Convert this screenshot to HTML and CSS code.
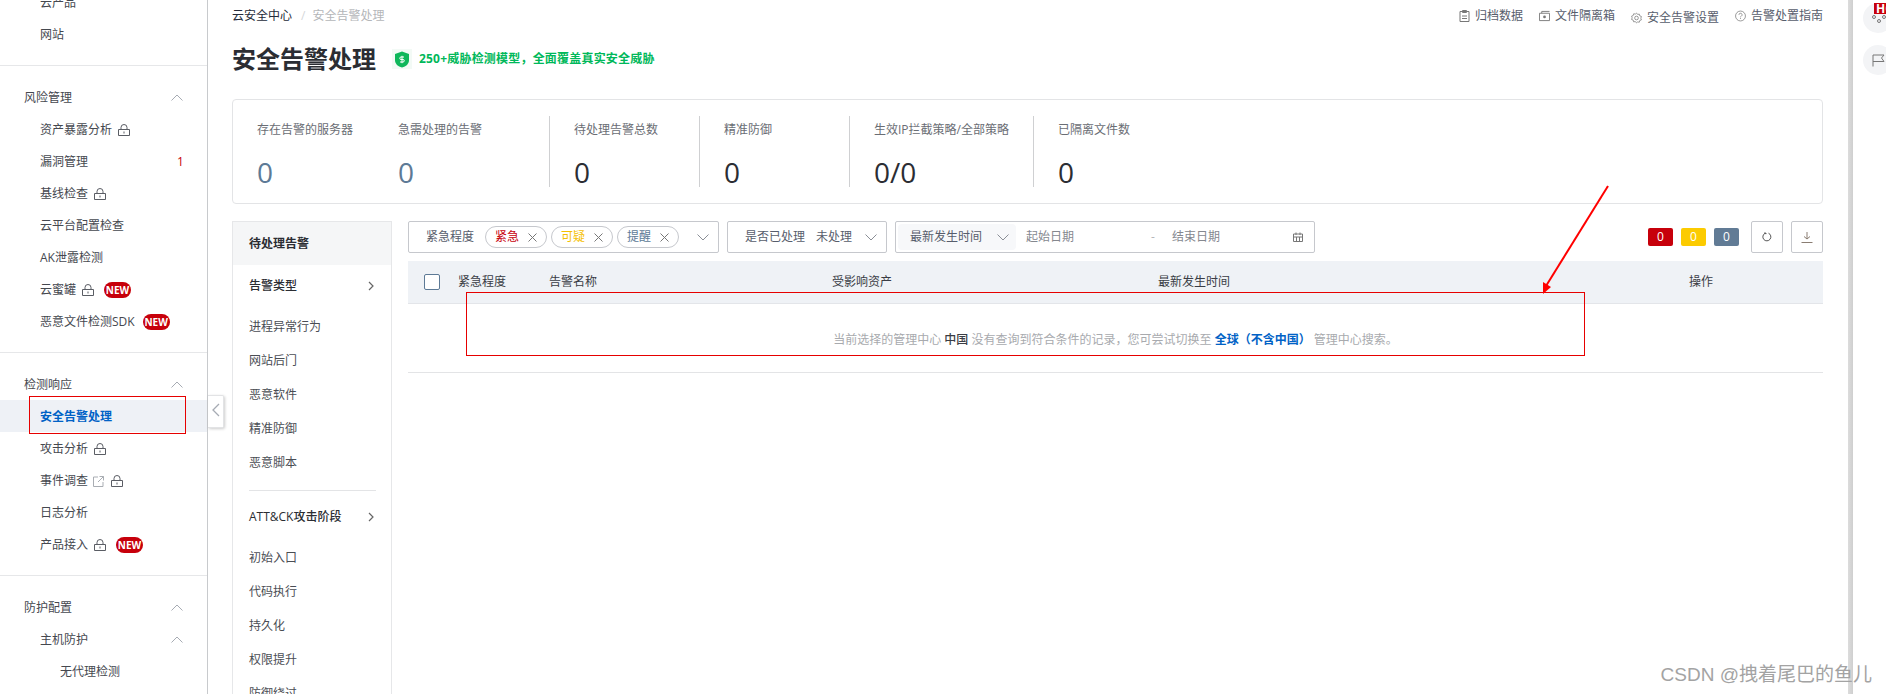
FILE: index.html
```html
<!DOCTYPE html>
<html lang="zh-CN">
  <head>
    <meta charset="UTF-8" />
    <title>安全告警处理</title>
    <link rel="stylesheet" href="styles.css">
  </head>
  <body>
    <!-- Shared icons -->
    <svg class="defs" width="0" height="0">
      <symbol id="i-lock" viewBox="0 0 12 12"><path d="M3 5.500V3.500a3 3 0 0 1 6 0v2M.5 5.500h11v6H.5zM6 7.500v2" fill="none" stroke="currentColor"/></symbol>
      <symbol id="i-up" viewBox="0 0 12 7"><path d="M.5 6.500 6 1l5.500 5.500" fill="none" stroke="currentColor"/></symbol>
      <symbol id="i-down" viewBox="0 0 12 7"><path d="M.5.5 6 6 11.500.5" fill="none" stroke="currentColor"/></symbol>
      <symbol id="i-right" viewBox="0 0 6 10"><path d="M1 1l4 4-4 4" fill="none" stroke="currentColor" stroke-width="1.200"/></symbol>
      <symbol id="i-x" viewBox="0 0 9 9"><path d="M.5.5l8 8M8.500.5l-8 8" fill="none" stroke="currentColor"/></symbol>
    </svg>

    <div class="page">
      <aside class="sidebar">
        <div class="nav-group nav-first">
          <div class="nav-item">云产品</div>
          <div class="nav-item">网站</div>
        </div>
        <div class="nav-group">
          <div class="nav-title">风险管理<svg class="nav-arrow"><use href="#i-up"/></svg></div>
          <div class="nav-item">资产暴露分析<svg class="lock"><use href="#i-lock"/></svg></div>
          <div class="nav-item">漏洞管理<span class="count">1</span></div>
          <div class="nav-item">基线检查<svg class="lock"><use href="#i-lock"/></svg></div>
          <div class="nav-item">云平台配置检查</div>
          <div class="nav-item">AK泄露检测</div>
          <div class="nav-item">云蜜罐<svg class="lock"><use href="#i-lock"/></svg><span class="new">NEW</span></div>
          <div class="nav-item">恶意文件检测SDK<span class="new new-near">NEW</span></div>
        </div>
        <div class="nav-group">
          <div class="nav-title">检测响应<svg class="nav-arrow"><use href="#i-up"/></svg></div>
          <div class="nav-item active">安全告警处理</div>
          <div class="nav-item">攻击分析<svg class="lock"><use href="#i-lock"/></svg></div>
          <div class="nav-item">事件调查
            <svg class="ext" viewBox="0 0 11 11"><path d="M5 1H.5v9.500h9.500V6M6.500.5h4v4M10.500.5 5 6" fill="none" stroke="currentColor"/></svg>
            <svg class="lock"><use href="#i-lock"/></svg>
          </div>
          <div class="nav-item">日志分析</div>
          <div class="nav-item">产品接入<svg class="lock"><use href="#i-lock"/></svg><span class="new">NEW</span></div>
        </div>
        <div class="nav-group nav-last">
          <div class="nav-title">防护配置<svg class="nav-arrow"><use href="#i-up"/></svg></div>
          <div class="nav-item">主机防护<svg class="nav-arrow"><use href="#i-up"/></svg></div>
          <div class="nav-item nav-sub">无代理检测</div>
        </div>
      </aside>

      <button class="collapse" type="button">
        <svg width="8" height="14" viewBox="0 0 8 14"><path d="M7 1 1 7l6 6" fill="none" stroke="currentColor" stroke-width="1.300"/></svg>
      </button>

      <main class="main">
        <div class="topbar">
          <div class="crumbs">
            <span class="crumb-root">云安全中心</span>
            <span class="crumb-sep">/</span>
            <span class="crumb-now">安全告警处理</span>
          </div>
          <div class="links">
            <a class="link">
              <svg viewBox="0 0 10 12"><path d="M.5 1.500h9v10h-9zM3 .5h4v2H3zM2.500 6h5M2.500 8.500h5" fill="none" stroke="currentColor"/></svg>归档数据
            </a>
            <a class="link">
              <svg viewBox="0 0 12 11"><path d="M.5 2.500h11v8H.5zM3 2.500V.5h8.500" fill="none" stroke="currentColor"/><circle cx="6" cy="6.500" r="1.500" fill="currentColor"/></svg>文件隔离箱
            </a>
            <a class="link link-low">
              <svg viewBox="0 0 12 12"><path d="M6 .6l1.200 1.500 1.900-.3.500 1.900 1.800.7-.7 1.800.7 1.800-1.800.7-.5 1.900-1.900-.3L6 11.400l-1.200-1.500-1.900.3-.5-1.900L.6 7.600l.7-1.800-.7-1.800 1.800-.7.500-1.900 1.900.3z" fill="none" stroke="currentColor" stroke-width=".8"/><circle cx="6" cy="6" r="2" fill="none" stroke="currentColor" stroke-width=".8"/></svg>安全告警设置
            </a>
            <a class="link">
              <svg viewBox="0 0 12 12"><circle cx="6" cy="6" r="5.400" fill="none" stroke="currentColor" stroke-width=".8"/><path d="M4.300 4.700a1.700 1.700 0 1 1 2.500 1.500c-.6.300-.8.600-.8 1.200M6 8.300v1" fill="none" stroke="currentColor" stroke-width=".8"/></svg>告警处置指南
            </a>
          </div>
        </div>

        <div class="title-row">
          <h1 class="title">安全告警处理</h1>
          <span class="shield">
            <svg width="16" height="17" viewBox="0 0 16 17"><path d="M8 .5 15 3v6c0 4-3 6.500-7 7.500C4 15.500 1 13 1 9V3z" fill="#0fb75b"/><path d="M10 6H7a1 1 0 0 0 0 2.500h2a1 1 0 0 1 0 2.500H6M8 4.800v7.400" fill="none" stroke="#fff"/></svg>
          </span>
          <span class="slogan">250+威胁检测模型，全面覆盖真实安全威胁</span>
        </div>

        <section class="stats">
          <div class="stat stat-first">
            <div class="stat-label">存在告警的服务器</div>
            <div class="stat-value muted">0</div>
          </div>
          <div class="stat stat-second">
            <div class="stat-label">急需处理的告警</div>
            <div class="stat-value muted">0</div>
          </div>
          <div class="stat">
            <div class="stat-label">待处理告警总数</div>
            <div class="stat-value">0</div>
          </div>
          <div class="stat">
            <div class="stat-label">精准防御</div>
            <div class="stat-value">0</div>
          </div>
          <div class="stat stat-wide">
            <div class="stat-label">生效IP拦截策略/全部策略</div>
            <div class="stat-value">0/0</div>
          </div>
          <div class="stat stat-last">
            <div class="stat-label">已隔离文件数</div>
            <div class="stat-value">0</div>
          </div>
        </section>

        <div class="content">
          <div class="filters">
            <div class="filter-head">待处理告警</div>
            <div class="filter-type">告警类型<svg class="type-arrow"><use href="#i-right"/></svg></div>
            <div class="filter-item">进程异常行为</div>
            <div class="filter-item">网站后门</div>
            <div class="filter-item">恶意软件</div>
            <div class="filter-item">精准防御</div>
            <div class="filter-item">恶意脚本</div>
            <div class="filter-line"></div>
            <div class="filter-type">ATT&amp;CK攻击阶段<svg class="type-arrow"><use href="#i-right"/></svg></div>
            <div class="filter-item">初始入口</div>
            <div class="filter-item">代码执行</div>
            <div class="filter-item">持久化</div>
            <div class="filter-item">权限提升</div>
            <div class="filter-item">防御绕过</div>
          </div>

          <div class="results">
            <div class="toolbar">
              <div class="select select-level">
                <span class="select-label">紧急程度</span>
                <span class="chip chip-red">紧急<svg class="chip-x"><use href="#i-x"/></svg></span>
                <span class="chip chip-yellow">可疑<svg class="chip-x"><use href="#i-x"/></svg></span>
                <span class="chip chip-grey">提醒<svg class="chip-x"><use href="#i-x"/></svg></span>
                <svg class="select-arrow"><use href="#i-down"/></svg>
              </div>
              <div class="select select-done">
                <span class="select-label">是否已处理</span>
                <span class="select-value">未处理</span>
                <svg class="select-arrow"><use href="#i-down"/></svg>
              </div>
              <div class="select select-date">
                <span class="date-type">最新发生时间<svg class="select-arrow"><use href="#i-down"/></svg></span>
                <span class="date-start">起始日期</span>
                <span class="date-dash">-</span>
                <span class="date-end">结束日期</span>
                <svg class="calendar" viewBox="0 0 10 10"><path d="M.5 2h9v7.500h-9zM.5 5h9M3 .5V3M7 .5V3M3.500 5v4.500M6.500 5v4.500" fill="none" stroke="currentColor"/></svg>
              </div>
              <div class="tools">
                <span class="num num-red">0</span>
                <span class="num num-yellow">0</span>
                <span class="num num-grey">0</span>
                <button class="tool first-tool" type="button">
                  <svg width="10" height="10" viewBox="0 0 10 10"><path d="M6.500 1.200a4 4 0 1 1-3.500.1M3 .2v1.400h1.500" fill="none" stroke="currentColor"/></svg>
                </button>
                <button class="tool" type="button">
                  <svg width="12" height="11" viewBox="0 0 12 11"><path d="M6 0v7M3 4.500 6 7l3-2.500M.5 10.500h11" fill="none" stroke="#8a7d72"/></svg>
                </button>
              </div>
            </div>

            <div class="table-head">
              <span class="checkbox"></span>
              <span>紧急程度</span>
              <span>告警名称</span>
              <span>受影响资产</span>
              <span>最新发生时间</span>
              <span>操作</span>
            </div>
            <div class="table-empty">
              当前选择的管理中心&nbsp;<b class="em-dark">中国</b>&nbsp;没有查询到符合条件的记录，您可尝试切换至&nbsp;<a class="em-blue">全球（不含中国）</a>&nbsp;管理中心搜索。
            </div>
          </div>
        </div>
      </main>

      <div class="edge"></div>
      <div class="rail">
        <div class="rail-btn">
          <span class="hot">HOT</span>
          <svg width="14" height="10" viewBox="0 0 14 10"><circle cx="2" cy="4" r="1.500" fill="none" stroke="#777"/><circle cx="7" cy="8" r="1.500" fill="none" stroke="#777"/><circle cx="12" cy="4" r="1.500" fill="none" stroke="#777"/></svg>
        </div>
        <div class="rail-btn">
          <svg width="13" height="13" viewBox="0 0 13 13"><path d="M1 12.500V1h11l-2.500 3L12 7.500H1" fill="none" stroke="#777"/></svg>
        </div>
      </div>
    </div>

    <!-- Red marks drawn on top of the screenshot -->
    <svg class="marks" width="1886" height="694" viewBox="0 0 1886 694">
      <rect x="29.500" y="396.500" width="156" height="37" fill="none" stroke="#e60000"/>
      <rect x="466.500" y="292.500" width="1118" height="63" fill="none" stroke="#e60000"/>
      <path d="M1608 186 1546 286" fill="none" stroke="#f00" stroke-width="2"/>
      <path d="M1543 294 1543 282 1551 287z" fill="#f00"/>
    </svg>
    <div class="watermark">CSDN @拽着尾巴的鱼儿</div>
  </body>
</html>
```

FILE: styles.css
```css
/* Base */
* {
  box-sizing: border-box;
}

html,
body {
  margin: 0;
  height: 694px;
  overflow: hidden;
  background: #fff;
}

body {
  position: relative;
  font-family: "Open Sans", "Noto Sans CJK SC", sans-serif;
  font-size: 12px;
  line-height: 20px;
  color: #3a3d45;
}

.defs {
  position: absolute;
}

.page {
  display: flex;
  height: 694px;
}

/* Left navigation */
.sidebar {
  flex: 0 0 208px;
  border-right: 1px solid #c8cacd;
  overflow: hidden;
  color: #45484f;
}

.nav-group {
  padding: 15px 0;
  border-bottom: 1px solid #e6e7e9;
}

.nav-first {
  margin-top: -29px;
}

.nav-last {
  border-bottom: none;
}

.nav-title,
.nav-item {
  display: flex;
  align-items: center;
  position: relative;
  height: 32px;
  padding-top: 2px;
  padding-left: 40px;
  white-space: nowrap;
}

.nav-title {
  padding-left: 24px;
}

.nav-sub {
  padding-left: 60px;
}

.nav-item.active {
  background: #eef1f6;
  color: #0062c6;
  font-weight: 700;
}

.nav-arrow {
  position: absolute;
  left: 171px;
  top: 13px;
  width: 12px;
  height: 7px;
  color: #a6abb3;
}

.lock {
  width: 12px;
  height: 12px;
  margin-left: 6px;
  color: #5a5d64;
}

.ext {
  width: 11px;
  height: 11px;
  margin-left: 5px;
  color: #a9adb3;
}

.ext + .lock {
  margin-left: 7px;
}

.count {
  position: absolute;
  left: 177px;
  color: #c7000b;
}

.new {
  width: 27px;
  height: 16px;
  margin-left: 10px;
  border-radius: 8px;
  background: #c7000b;
  color: #fff;
  font-size: 10px;
  font-weight: 700;
  line-height: 16px;
  text-align: center;
}

.new-near {
  margin-left: 8px;
}

.collapse {
  position: absolute;
  left: 208px;
  top: 395px;
  width: 16px;
  height: 33px;
  padding: 0;
  border: 1px solid #e2e3e5;
  border-left: none;
  border-radius: 0 2px 2px 0;
  background: #fff;
  box-shadow: 1px 1px 3px rgba(0, 0, 0, 0.2);
  color: #a6abb3;
}

/* Main area */
.main {
  flex: 0 0 1640px;
  padding: 6px 25px 0 24px;
  overflow: hidden;
}

.topbar {
  display: flex;
  justify-content: space-between;
  height: 20px;
}

.crumbs {
  display: flex;
}

.crumb-root {
  color: #252b3a;
}

.crumb-sep {
  margin: 0 7px 0 9px;
  color: #d5d7da;
}

.crumb-now {
  color: #b4b6b9;
}

.links {
  display: flex;
  gap: 16px;
}

.link {
  display: flex;
  align-items: center;
  gap: 5px;
  color: #575d6c;
}

.link-low {
  padding-top: 3px;
}

.link svg {
  width: 11px;
  height: 12px;
  color: #777;
}

.title-row {
  display: flex;
  align-items: center;
  height: 36px;
  margin-top: 15px;
}

.title {
  margin: 0;
  font-size: 24px;
  font-weight: 700;
  line-height: 36px;
  color: #2b2d33;
}

.shield {
  display: flex;
  align-items: center;
  justify-content: center;
  width: 20px;
  height: 20px;
  margin-left: 16px;
  background: #f3faf6;
}

.slogan {
  margin-left: 7px;
  color: #00b85a;
  font-weight: 700;
  letter-spacing: 0.2px;
}

/* Stats card */
.stats {
  display: flex;
  height: 105px;
  margin-top: 22px;
  padding: 16px 0;
  border: 1px solid #e3e4e6;
  border-radius: 4px;
}

.stat {
  width: 150px;
  height: 71px;
  padding: 4px 0 0 24px;
  border-right: 1px solid #cfd0d2;
  white-space: nowrap;
}

.stat-first {
  width: 165px;
  border-right: none;
}

.stat-second {
  width: 152px;
  padding-left: 0;
}

.stat-wide {
  width: 184px;
}

.stat-last {
  border-right: none;
}

.stat-label {
  color: #6a6d74;
}

.stat-value {
  margin-top: 13px;
  font-size: 28px;
  line-height: 38px;
  color: #2b2d33;
}

.stat-value.muted {
  color: #5d7a96;
}

/* Filter column and results */
.content {
  display: flex;
  gap: 16px;
  margin-top: 17px;
}

.filters {
  flex: 0 0 160px;
  height: 500px;
  border: 1px solid #e6e7e9;
  border-bottom: none;
  color: #4a4d54;
}

.filter-head {
  height: 43px;
  padding-left: 16px;
  background: #f5f6f7;
  font-weight: 700;
  line-height: 43px;
  color: #2b2d33;
}

.filter-type {
  position: relative;
  height: 42px;
  margin-bottom: 3px;
  padding-left: 16px;
  font-weight: 500;
  line-height: 42px;
  color: #2b2d33;
}

.type-arrow {
  position: absolute;
  left: 135px;
  top: 16px;
  width: 6px;
  height: 10px;
  color: #666;
}

.filter-item {
  height: 34px;
  padding-left: 16px;
  line-height: 34px;
}

.filter-line {
  height: 1px;
  margin: 10px 15px 5px 16px;
  background: #e3e4e6;
}

.results {
  flex: 1;
  min-width: 0;
}

.toolbar {
  display: flex;
  align-items: center;
  gap: 8px;
  height: 32px;
}

.select {
  display: flex;
  align-items: center;
  position: relative;
  height: 32px;
  border: 1px solid #c6c8cd;
  border-radius: 2px;
  white-space: nowrap;
  color: #575d6c;
}

.select-arrow {
  width: 12px;
  height: 7px;
  color: #8a8e96;
}

.select-level {
  width: 311px;
  padding-left: 17px;
}

.select-level .select-arrow {
  margin-left: 18px;
}

.chip {
  display: flex;
  align-items: center;
  justify-content: space-between;
  width: 62px;
  height: 22px;
  margin-left: 4px;
  padding: 0 9px;
  border: 1px solid #c6c8cd;
  border-radius: 11px;
}

.select-label + .chip {
  margin-left: 11px;
}

.chip-red {
  color: #c7000b;
}

.chip-yellow {
  color: #f5c000;
}

.chip-grey {
  color: #5d7a96;
}

.chip-x {
  width: 9px;
  height: 9px;
  color: #777;
}

.select-done {
  width: 160px;
  padding-left: 17px;
}

.select-value {
  margin-left: 11px;
}

.select-done .select-arrow {
  margin-left: 13px;
}

.select-date {
  width: 420px;
  padding: 2px;
}

.date-type {
  display: flex;
  align-items: center;
  width: 118px;
  height: 26px;
  padding-left: 12px;
  border-radius: 4px;
  background: #f7f8fa;
}

.date-type .select-arrow {
  margin-left: 15px;
}

.date-start {
  margin-left: 10px;
  color: #85888f;
}

.date-dash {
  margin-left: 77px;
  color: #b4b6b9;
}

.date-end {
  margin-left: 17px;
  color: #85888f;
}

.calendar {
  width: 10px;
  height: 10px;
  margin-left: 73px;
  color: #777;
}

.tools {
  display: flex;
  align-items: center;
  margin-left: auto;
}

.num {
  width: 25px;
  height: 18px;
  margin-left: 8px;
  border-radius: 2px;
  color: #fff;
  line-height: 18px;
  text-align: center;
}

.num-red {
  background: #c7000b;
}

.num-yellow {
  background: #fccb00;
}

.num-grey {
  background: #617b95;
}

.tool {
  display: flex;
  align-items: center;
  justify-content: center;
  width: 32px;
  height: 32px;
  margin-left: 8px;
  padding: 0;
  border: 1px solid #c6c8cd;
  border-radius: 2px;
  background: #fff;
  color: #555;
}

.first-tool {
  margin-left: 12px;
}

.table-head {
  display: grid;
  grid-template-columns: 34px 91px 283px 326px 531px 1fr;
  align-items: center;
  height: 43px;
  margin-top: 8px;
  padding-left: 16px;
  border-bottom: 1px solid #e3e5e9;
  background: #eff2f6;
  color: #3a3d45;
}

.checkbox {
  width: 16px;
  height: 16px;
  border: 1px solid #5d7a96;
  border-radius: 2px;
  background: #fff;
}

.table-empty {
  height: 69px;
  padding-top: 26px;
  border-bottom: 1px solid #e3e4e6;
  text-align: center;
  color: #a8aaae;
}

.em-dark {
  font-weight: 500;
  color: #3a3d45;
}

.em-blue {
  font-weight: 700;
  color: #0062c6;
}

/* Right edge */
.edge {
  flex: 0 0 5px;
  background: linear-gradient(90deg, #dcdcdc, #cfcfcf);
}

.rail {
  flex: 1;
  padding: 3px 0 0 10px;
  overflow: hidden;
}

.rail-btn {
  display: flex;
  align-items: center;
  position: relative;
  width: 30px;
  height: 30px;
  margin-bottom: 12px;
  padding-left: 9px;
  border-radius: 50%;
  background: #f3f4f6;
}

.hot {
  position: absolute;
  left: 11px;
  top: 0;
  height: 11px;
  padding: 0 2px;
  background: #c7000b;
  color: #fff;
  font-size: 12px;
  font-weight: 700;
  line-height: 11px;
}

/* Overlays */
.marks {
  position: absolute;
  left: 0;
  top: 0;
  pointer-events: none;
}

.watermark {
  position: absolute;
  right: 14px;
  bottom: 7px;
  font-family: "Liberation Sans", "Noto Sans CJK SC", sans-serif;
  font-size: 19px;
  line-height: 24px;
  color: #a3a3a3;
}
```
